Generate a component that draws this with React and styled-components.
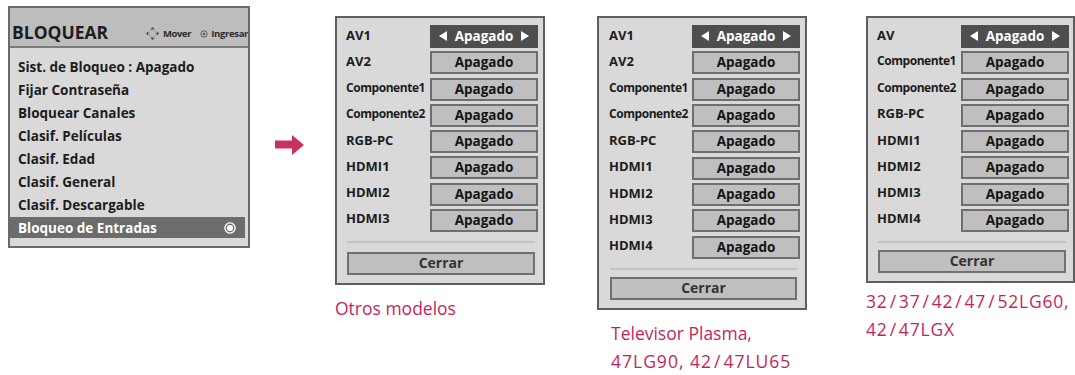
import React from 'react';
import styled, { createGlobalStyle } from 'styled-components';

const Global = createGlobalStyle`
  html, body { margin: 0; padding: 0; background: #fff; }
  body { font-family: "Open Sans", "Noto Sans", sans-serif; }
`;

const Page = styled.div`
  display: flex;
  align-items: flex-start;
  padding: 6px 0 0 8px;
  width: 1075px;
  height: 375px;
  box-sizing: border-box;
  overflow: hidden;
`;

/* ---------- left OSD menu ---------- */
const MenuPanel = styled.div`
  width: 242px;
  flex: none;
  box-sizing: border-box;
  border: 2px solid #6a6a6a;
  background: #d9d9d9;
`;

const MenuHeader = styled.div`
  height: 40px;
  box-sizing: border-box;
  background: #bdbdbd;
  border-bottom: 2px solid #7c7c7c;
  display: flex;
  align-items: flex-end;
  justify-content: space-between;
  padding: 0 0 4px 2px;
`;

const Title = styled.div`
  font-size: 17.5px;
  font-weight: 700;
  line-height: 20px;
  color: #1c1c1c;
`;

const Hints = styled.div`
  display: flex;
  align-items: center;
  margin-bottom: 2px;
  font-size: 9.5px;
  font-weight: 700;
  letter-spacing: -0.35px;
  color: #2a2a2a;
  white-space: nowrap;
`;

const Hint = styled.span`
  display: flex;
  align-items: center;
  gap: ${p => p.$gap}px;
  margin-left: ${p => p.$ml}px;
`;

const MenuList = styled.div`
  display: flex;
  flex-direction: column;
  gap: 2px;
  padding: 8px 3px 8px 0;
`;

const MenuItem = styled.div`
  height: 21px;
  display: flex;
  align-items: center;
  justify-content: space-between;
  padding: 0 9px 0 8px;
  font-size: 13.5px;
  font-weight: 700;
  color: ${p => (p.$active ? '#ffffff' : '#1c1c1c')};
  background: ${p => (p.$active ? '#6c6c6c' : 'transparent')};
  white-space: nowrap;
`;

/* ---------- arrow ---------- */
const ArrowBox = styled.div`
  flex: none;
  margin: 129px 0 0 25px;
  width: 29px;
  height: 20px;
  display: flex;
`;

/* ---------- input lock panels ---------- */
const Column = styled.div`
  flex: none;
  display: flex;
  flex-direction: column;
  width: ${p => p.$w}px;
  margin: 10px 0 0 ${p => p.$ml}px;
`;

const Panel = styled.div`
  box-sizing: border-box;
  border: 2px solid #5e5e5e;
  background: #d9d9d9;
  padding: 7px ${p => p.$pr}px 8px ${p => p.$pl}px;
  display: flex;
  flex-direction: column;
`;

const Rows = styled.div`
  display: flex;
  flex-direction: column;
  gap: ${p => p.$gap}px;
`;

const Row = styled.div`
  display: flex;
  align-items: center;
  height: 23px;
`;

const Label = styled.div`
  flex: 1;
  min-width: 0;
  font-size: ${p => (p.$tight ? 12 : 13)}px;
  letter-spacing: ${p => (p.$tight ? -0.45 : 0)}px;
  font-weight: 700;
  color: #1c1c1c;
  white-space: nowrap;
  padding-bottom: 4px;
`;

const ValueButton = styled.div`
  flex: none;
  width: 108px;
  height: 23px;
  box-sizing: border-box;
  border: 2px solid ${p => (p.$active ? '#4e4e4e' : '#6e6e6e')};
  background: ${p => (p.$active ? '#4e4e4e' : '#bfbfbf')};
  color: ${p => (p.$active ? '#ffffff' : '#141414')};
  display: flex;
  align-items: center;
  justify-content: ${p => (p.$active ? 'space-between' : 'center')};
  padding: 0 ${p => (p.$active ? 7 : 0)}px 1px;
  font-size: 13.5px;
  font-weight: 700;
`;

const Tri = styled.span`
  width: 0;
  height: 0;
  border-top: 5px solid transparent;
  border-bottom: 5px solid transparent;
  ${p => (p.$dir === 'left' ? 'border-right: 8px solid #fff;' : 'border-left: 8px solid #fff;')}
`;

const Divider = styled.div`
  height: 2px;
  background: #c3c3c3;
  margin: 9px 3px 0 1px;
`;

const CloseButton = styled.div`
  height: 23px;
  box-sizing: border-box;
  margin: ${p => p.$mt}px 3px 0 1px;
  border: 2px solid #707070;
  background: #bfbfbf;
  display: flex;
  align-items: center;
  justify-content: center;
  padding-bottom: 1px;
  font-size: 14px;
  font-weight: 700;
  color: #333;
`;

const Caption = styled.div`
  margin-top: ${p => p.$mt}px;
  padding-left: ${p => p.$pl}px;
  font-family: "Open Sans", "Noto Sans", sans-serif;
  font-size: 17.5px;
  line-height: 28px;
  color: #c81f5b;
  white-space: nowrap;
`;

const CapLine = styled.div`
  letter-spacing: ${p => p.$ls || 0}px;
`;

const Slash = styled.span`
  margin: 0 2px;
`;

/* ---------- icons ---------- */
const MoveIcon = () => (
  <svg width="13" height="13" viewBox="0 0 13 13">
    <circle cx="6.5" cy="6.5" r="3.6" fill="none" stroke="#777" strokeWidth="1" strokeDasharray="1.4 1.4" />
    <path d="M6.5 0 L8.6 2.2 L4.4 2.2 Z" fill="#444" />
    <path d="M6.5 13 L8.6 10.8 L4.4 10.8 Z" fill="#444" />
    <path d="M0 6.5 L2.2 4.4 L2.2 8.6 Z" fill="#444" />
    <path d="M13 6.5 L10.8 4.4 L10.8 8.6 Z" fill="#444" />
  </svg>
);

const EnterIcon = () => (
  <svg width="8" height="8" viewBox="0 0 8 8">
    <circle cx="4" cy="4" r="3.2" fill="none" stroke="#555" strokeWidth="0.9" />
    <circle cx="4" cy="4" r="1.3" fill="#555" />
  </svg>
);

const RadioIcon = () => (
  <svg width="12" height="12" viewBox="0 0 12 12">
    <circle cx="6" cy="6" r="5.1" fill="none" stroke="#fff" strokeWidth="1.4" />
    <circle cx="6" cy="6" r="3.1" fill="#fff" />
  </svg>
);

const Arrow = () => (
  <svg width="29" height="20" viewBox="0 0 29 20">
    <path d="M0 5.5 H17 V0 L29 10 L17 20 V13.5 H0 Z" fill="#c8325d" />
  </svg>
);

/* ---------- data ---------- */
const menuItems = [
  'Sist. de Bloqueo : Apagado',
  'Fijar Contraseña',
  'Bloquear Canales',
  'Clasif. Películas',
  'Clasif. Edad',
  'Clasif. General',
  'Clasif. Descargable',
  'Bloqueo de Entradas',
];

const panels = [
  {
    ml: 31,
    w: 210,
    pl: 9,
    pr: 5,
    gap: 3.25,
    closeMt: 9,
    rows: ['AV1', 'AV2', 'Componente1', 'Componente2', 'RGB-PC', 'HDMI1', 'HDMI2', 'HDMI3'],
    capMt: 9,
    capPl: 0,
    caption: [{ text: 'Otros modelos' }],
  },
  {
    ml: 52,
    w: 210,
    pl: 10,
    pr: 5,
    gap: 3.35,
    closeMt: 7,
    rows: ['AV1', 'AV2', 'Componente1', 'Componente2', 'RGB-PC', 'HDMI1', 'HDMI2', 'HDMI3', 'HDMI4'],
    capMt: 9,
    capPl: 14,
    caption: [{ text: 'Televisor Plasma,' }, { text: '47LG90, 42/47LU65', ls: 1 }],
  },
  {
    ml: 59,
    w: 209,
    pl: 9,
    pr: 4,
    gap: 3.25,
    closeMt: 7,
    rows: ['AV', 'Componente1', 'Componente2', 'RGB-PC', 'HDMI1', 'HDMI2', 'HDMI3', 'HDMI4'],
    capMt: 4,
    capPl: 0,
    caption: [{ text: '32/37/42/47/52LG60,', ls: 0.8 }, { text: '42/47LGX', ls: 0.8 }],
  },
];

const renderSlashes = text =>
  text.split('/').flatMap((part, i) => (i === 0 ? [part] : [<Slash key={i}>/</Slash>, part]));

export default function App() {
  return (
    <>
      <Global />
      <Page>
        <MenuPanel>
          <MenuHeader>
            <Title>BLOQUEAR</Title>
            <Hints>
              <Hint $gap={4} $ml={0}>
                <MoveIcon />
                Mover
              </Hint>
              <Hint $gap={3} $ml={9}>
                <EnterIcon />
                Ingresar
              </Hint>
            </Hints>
          </MenuHeader>
          <MenuList>
            {menuItems.map((item, i) => {
              const active = i === menuItems.length - 1;
              return (
                <MenuItem key={item} $active={active}>
                  <span>{item}</span>
                  {active && <RadioIcon />}
                </MenuItem>
              );
            })}
          </MenuList>
        </MenuPanel>

        <ArrowBox>
          <Arrow />
        </ArrowBox>

        {panels.map((p, pi) => (
          <Column key={pi} $ml={p.ml} $w={p.w}>
            <Panel $pl={p.pl} $pr={p.pr}>
              <Rows $gap={p.gap}>
                {p.rows.map((r, i) => (
                  <Row key={r}>
                    <Label $tight={r.startsWith('Componente')}>{r}</Label>
                    {i === 0 ? (
                      <ValueButton $active>
                        <Tri $dir="left" />
                        Apagado
                        <Tri $dir="right" />
                      </ValueButton>
                    ) : (
                      <ValueButton>Apagado</ValueButton>
                    )}
                  </Row>
                ))}
              </Rows>
              <Divider />
              <CloseButton $mt={p.closeMt}>Cerrar</CloseButton>
            </Panel>
            <Caption $mt={p.capMt} $pl={p.capPl}>
              {p.caption.map((line, li) => (
                <CapLine key={li} $ls={line.ls}>
                  {renderSlashes(line.text)}
                </CapLine>
              ))}
            </Caption>
          </Column>
        ))}
      </Page>
    </>
  );
}
